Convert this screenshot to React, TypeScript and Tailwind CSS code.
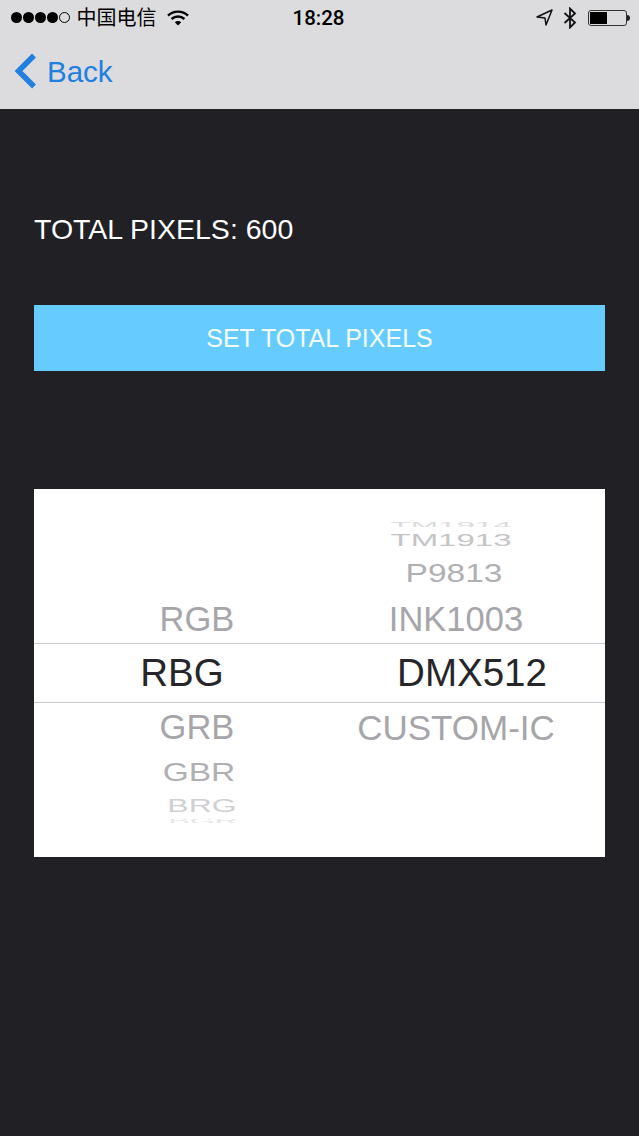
// Pixel strip settings — iOS nav bar, total pixels button, and chip/colour order picker.
import { cx } from 'class-variance-authority'

const sans = 'font-["Liberation_Sans","Noto_Sans_CJK_SC",sans-serif]'

function Wifi() {
  return (
    <svg width="22" height="16" viewBox="0 0 22 16" className="text-black">
      <path d="M1 5.6 A14.5 14.5 0 0 1 21 5.6" fill="none" stroke="currentColor" strokeWidth="2.4" />
      <path d="M4.6 9 A9.4 9.4 0 0 1 17.4 9" fill="none" stroke="currentColor" strokeWidth="2.4" />
      <path d="M11 15.6 L7.8 12.2 A4.6 4.6 0 0 1 14.2 12.2 Z" fill="currentColor" />
    </svg>
  )
}

function StatusRight() {
  return (
    <div className="flex items-center">
      <svg width="17" height="17" viewBox="0 0 17 17" className="mr-[10px]">
        <path d="M16 1 L1 8 L9 9 L10 16 Z" fill="none" stroke="#111" strokeWidth="1.5" strokeLinejoin="round" />
      </svg>
      <svg width="14" height="22" viewBox="0 0 14 22" className="mr-[11px]">
        <path d="M1.5 6 L12 15.5 L7 20.5 L7 1.5 L12 6.5 L1.5 16" fill="none" stroke="#111" strokeWidth="1.8" />
      </svg>
      <div className="flex items-center">
        <div className="h-[16px] w-[39px] rounded-[3px] border border-[#333] p-[1px]">
          <div className="h-full w-[17px] bg-black" />
        </div>
        <div className="h-[6px] w-[3px] rounded-r-full bg-[#222]" />
      </div>
    </div>
  )
}

function StatusBar() {
  return (
    <div className="flex h-[35px] items-center justify-between pl-[11px] pr-[9px] text-black">
      <div className="flex w-[240px] items-center">
        <div className="flex gap-[1.5px]">
          {[0, 1, 2, 3].map((i) => (
            <span key={i} className="size-[10.5px] rounded-full bg-black" />
          ))}
          <span className="size-[10.5px] rounded-full border border-black" />
        </div>
        <span className="ml-[7px] text-[20px] leading-none">中国电信</span>
        <span className="ml-[10px]">
          <Wifi />
        </span>
      </div>
      <span className='-translate-x-[2px] translate-y-[1px] font-["Roboto",sans-serif] text-[20.5px] font-medium leading-none'>18:28</span>
      <div className="flex w-[240px] justify-end">
        <StatusRight />
      </div>
    </div>
  )
}

function NavBar() {
  return (
    <div className="flex h-[74px] items-start pl-[14px] pt-[18px] text-[#2080e0]">
      <svg width="23" height="36" viewBox="0 0 23 36">
        <path d="M20 2.5 L4.5 18 L20 33.5" fill="none" stroke="currentColor" strokeWidth="5.5" />
      </svg>
      <span className="ml-[10px] text-[29.5px] leading-[37px]">Back</span>
    </div>
  )
}

type RowProps = {
  h: string
  left?: string
  right?: string
  leftCls?: string
  rightCls?: string
  cls?: string
}

function Row({ h, left, right, leftCls, rightCls, cls }: RowProps) {
  return (
    <div className={cx('flex items-center overflow-hidden whitespace-nowrap', h, cls)}>
      <div className="flex w-[326px] shrink-0 justify-center">
        <span className={leftCls}>{left}</span>
      </div>
      <div className="flex w-[192px] shrink-0 justify-center">
        <span className={rightCls}>{right}</span>
      </div>
    </div>
  )
}

function Picker() {
  const near = 'leading-none text-[#a6a6aa]'
  return (
    <div className="flex h-[368px] flex-col bg-white pt-[32px]">
      <Row h="h-[6px]" right="TM1914" rightCls="-translate-x-[5px] text-[33px] leading-none text-[#dcdcdc] scale-y-[0.3]" />
      <Row h="h-[26px]" right="TM1913" rightCls="-translate-x-[5px] text-[33px] leading-none text-[#c4c4c6] scale-y-[0.52]" />
      <Row h="h-[40px]" right="P9813" rightCls="-translate-x-[2px] translate-y-[1px] text-[33.5px] leading-none text-[#b0b0b3] scale-y-[0.76]" />
      <Row h="h-[50px]" left="RGB" right="INK1003" leftCls={cx(near, 'text-[34.5px]')} rightCls={cx(near, 'text-[34.5px]')} cls="pt-[2px]" />
      <Row
        h="h-[60px]"
        left="RBG"
        right="DMX512"
        leftCls="-translate-x-[15px] text-[38.5px] leading-none text-[#26262a]"
        rightCls="translate-x-[16px] text-[38.5px] leading-none text-[#26262a]"
        cls="border-y border-[#c8c8cc]"
      />
      <Row h="h-[50px]" left="GRB" right="CUSTOM-IC" leftCls={cx(near, 'text-[34.5px]')} rightCls={cx(near, 'text-[35px]')} cls="pb-[2px]" />
      <Row h="h-[40px]" left="GBR" leftCls="translate-x-[2px] text-[33.5px] leading-none text-[#b0b0b3] scale-y-[0.76]" />
      <Row h="h-[26px]" left="BRG" leftCls="translate-x-[5px] text-[32px] leading-none text-[#d0d0d2] scale-y-[0.55]" />
      <Row h="h-[4px]" left="BGR" leftCls="translate-x-[6px] text-[32px] leading-none text-[#e6e6e6] scale-y-[0.3]" />
    </div>
  )
}

export default function App() {
  return (
    <div className={cx('flex h-[1136px] w-full flex-col overflow-hidden bg-[#202025]', sans)}>
      <div className="bg-[#dcdbde]">
        <StatusBar />
        <NavBar />
      </div>
      <div className="px-[34px]">
        <div className="mt-[103px] text-[28.5px] leading-[34px] text-white">TOTAL PIXELS: 600</div>
        <button
          type="button"
          className="mt-[59px] flex h-[66px] w-full items-center justify-center bg-[#66ccff] pt-[2px] text-[25px] text-[#f4fbff]"
        >
          SET TOTAL PIXELS
        </button>
        <div className="mt-[118px]">
          <Picker />
        </div>
      </div>
    </div>
  )
}
